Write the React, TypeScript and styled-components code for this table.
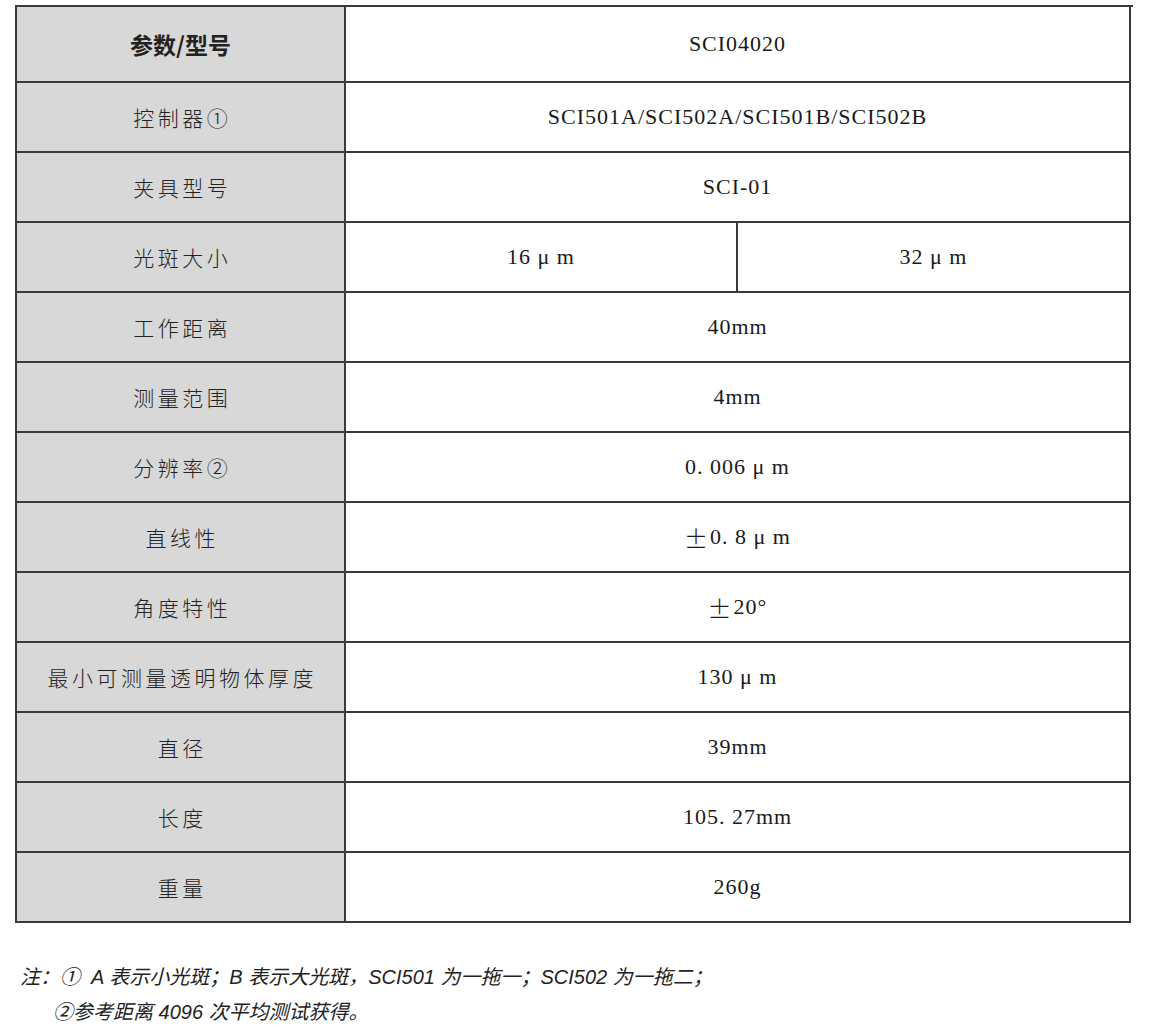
import styled, { createGlobalStyle } from "styled-components";

const GlobalStyle = createGlobalStyle`
  body {
    margin: 0;
    background: #ffffff;
    color: #1a1a1a;
  }
`;

const Page = styled.div`
  padding: 5px 0 0 15px;
`;

const Table = styled.div`
  display: grid;
  grid-template-columns: 329px 392px 393px;
  grid-template-rows: 76px;
  grid-auto-rows: 70px;
  width: 1116px;
  border-top: 2px solid #3a3a3a;
  border-left: 2px solid #3a3a3a;
`;

const Cell = styled.div<{ $span?: number }>`
  grid-column: span ${(p) => p.$span ?? 1};
  display: flex;
  align-items: center;
  justify-content: center;
  box-sizing: border-box;
  border-right: 2px solid #3a3a3a;
  border-bottom: 2px solid #3a3a3a;
  font-family: "Liberation Serif", "Noto Sans CJK SC", serif;
  font-size: 22px;
  letter-spacing: 1px;
  color: #1a1a1a;
  white-space: pre;
`;

const Label = styled(Cell)<{ $head?: boolean }>`
  background: #d8d8d8;
  font-family: "Noto Sans CJK SC", sans-serif;
  font-size: ${(p) => (p.$head ? "23px" : "21px")};
  font-weight: ${(p) => (p.$head ? 700 : 300)};
  letter-spacing: ${(p) => (p.$head ? "0" : "3.5px")};
  padding-left: ${(p) => (p.$head ? "0" : "3.5px")};
  color: #222222;
`;

// full-width plus/minus as in the source document
const Sign = styled.span`
  font-family: "Noto Sans CJK SC", sans-serif;
  font-weight: 300;
  font-size: 24px;
  letter-spacing: 0;
  margin-right: 2px;
`;

const Notes = styled.div`
  margin-top: 37px;
  padding-left: 5px;
  font-family: "Liberation Sans", "Noto Sans CJK SC", sans-serif;
  font-style: italic;
  font-size: 20px;
  line-height: 35px;
  color: #222222;
`;

const NoteLine = styled.div<{ $indent?: number }>`
  padding-left: ${(p) => p.$indent ?? 0}px;
  white-space: pre;
`;

const rows: { label: string; values: string[] }[] = [
  { label: "控制器①", values: ["SCI501A/SCI502A/SCI501B/SCI502B"] },
  { label: "夹具型号", values: ["SCI-01"] },
  { label: "光斑大小", values: ["16 μ m", "32 μ m"] },
  { label: "工作距离", values: ["40mm"] },
  { label: "测量范围", values: ["4mm"] },
  { label: "分辨率②", values: ["0. 006 μ m"] },
  { label: "直线性", values: ["±0. 8 μ m"] },
  { label: "角度特性", values: ["±20°"] },
  { label: "最小可测量透明物体厚度", values: ["130 μ m"] },
  { label: "直径", values: ["39mm"] },
  { label: "长度", values: ["105. 27mm"] },
  { label: "重量", values: ["260g"] },
];

export default function App() {
  return (
    <Page>
      <GlobalStyle />
      <Table>
        <Label $head>参数/型号</Label>
        <Cell $span={2}>SCI04020</Cell>
        {rows.map((row) => (
          <Row key={row.label} label={row.label} values={row.values} />
        ))}
      </Table>
      <Notes>
        <NoteLine>注：①  A 表示小光斑；B 表示大光斑，SCI501 为一拖一；SCI502 为一拖二；</NoteLine>
        <NoteLine $indent={33}>②参考距离 4096 次平均测试获得。</NoteLine>
      </Notes>
    </Page>
  );
}

function Value({ text }: { text: string }) {
  if (text.startsWith("±")) {
    return (
      <>
        <Sign>±</Sign>
        {text.slice(1)}
      </>
    );
  }
  return <>{text}</>;
}

function Row({ label, values }: { label: string; values: string[] }) {
  return (
    <>
      <Label>{label}</Label>
      {values.map((v) => (
        <Cell key={v} $span={values.length === 1 ? 2 : 1}>
          <Value text={v} />
        </Cell>
      ))}
    </>
  );
}
